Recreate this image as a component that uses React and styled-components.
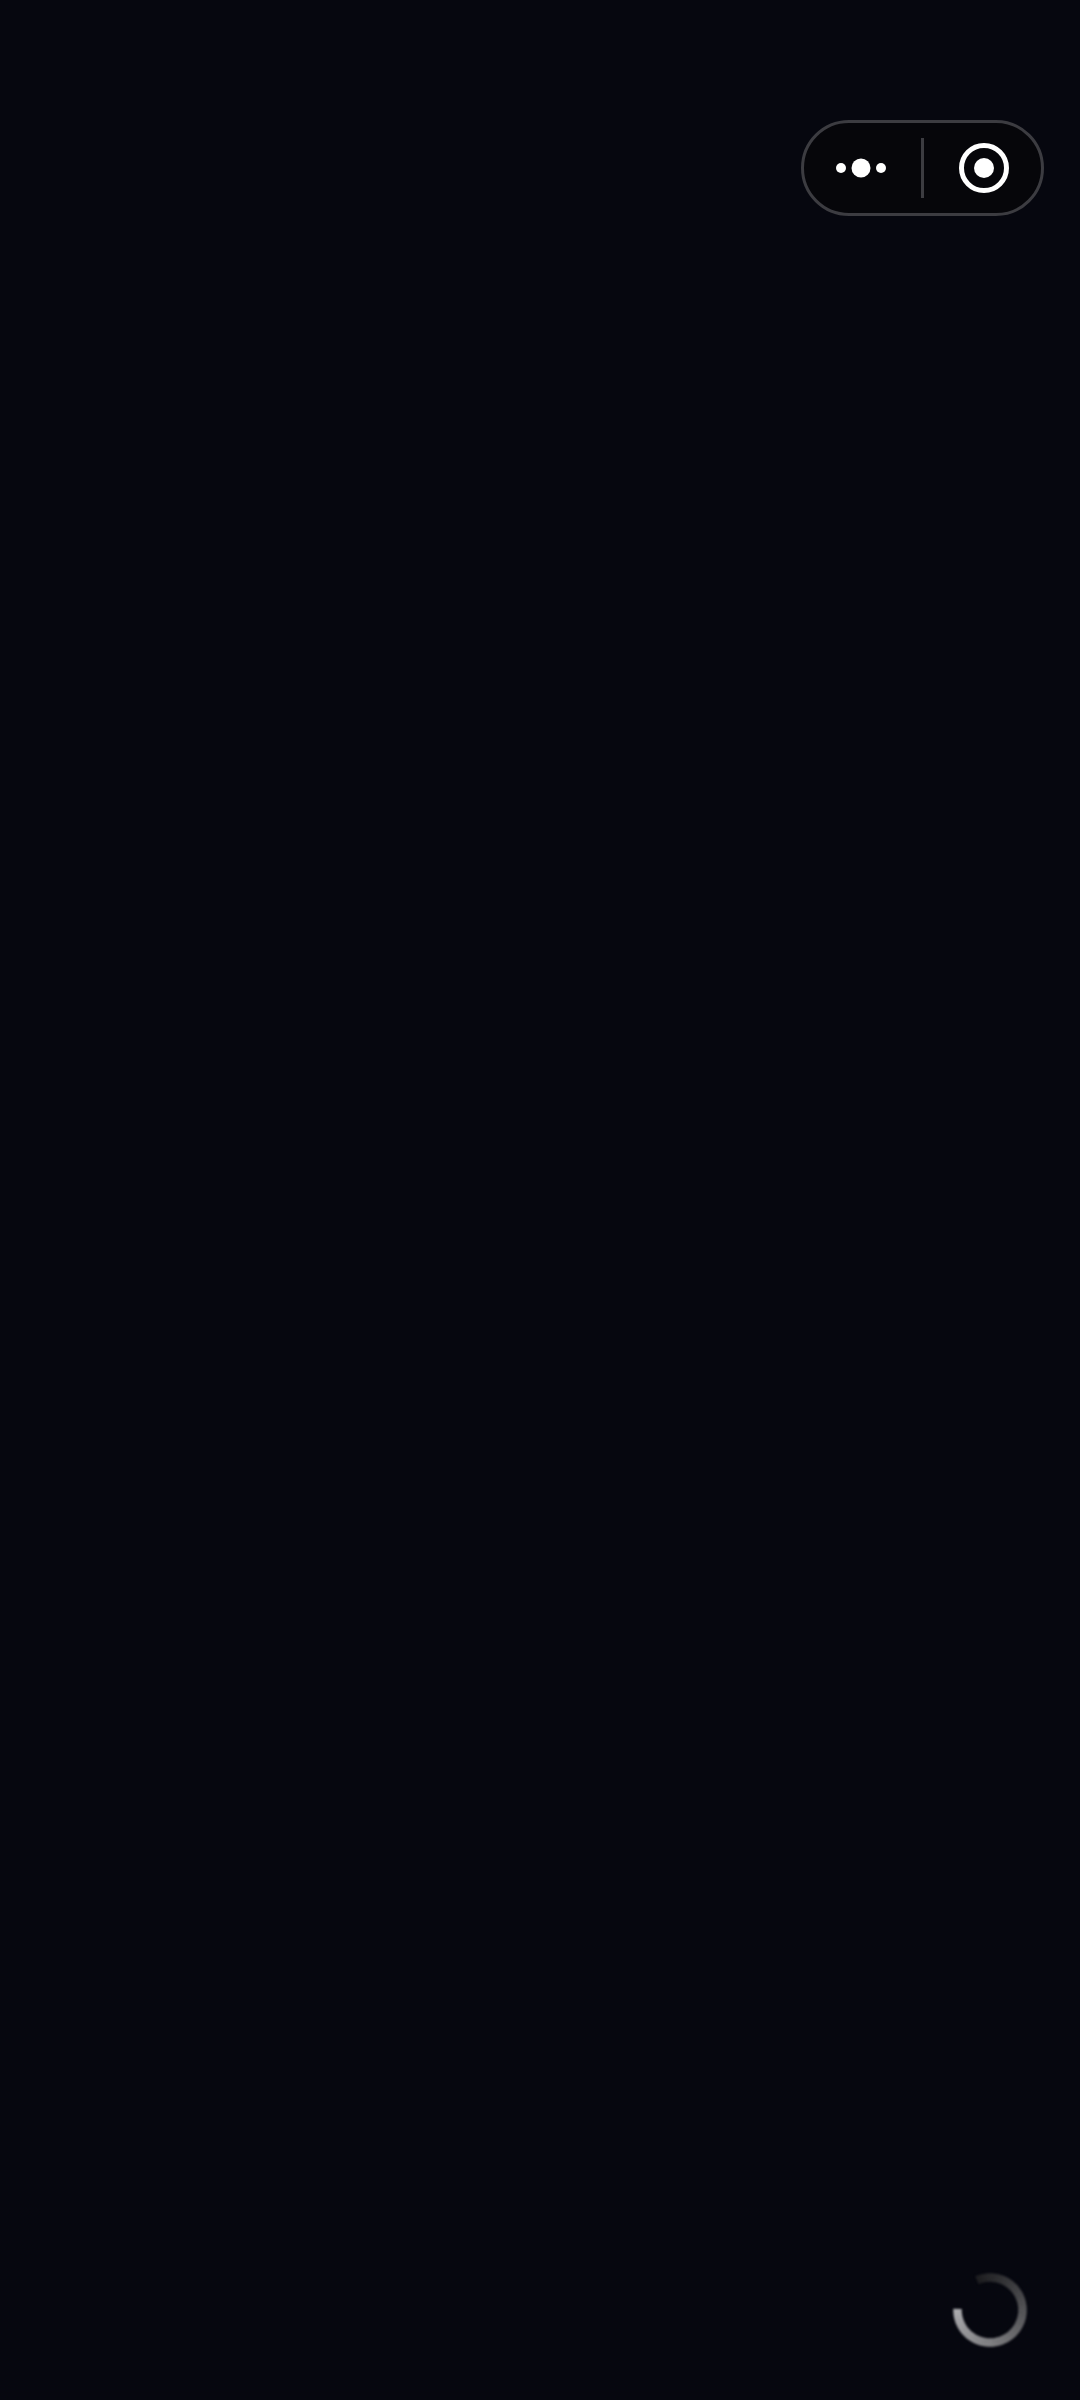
import React from "react";
import styled, { createGlobalStyle } from "styled-components";

const Global = createGlobalStyle`
  html, body { margin: 0; padding: 0; background: #06070f; }
`;

const Page = styled.main`
  box-sizing: border-box;
  width: 1080px;
  height: 2400px;
  background: #06070f;
  padding: 120px 36px 48px 48px;
  display: flex;
  flex-direction: column;
  justify-content: space-between;
  align-items: flex-end;
`;

const Capsule = styled.div`
  box-sizing: border-box;
  width: 243px;
  height: 96px;
  border: 3px solid #3c3c41;
  border-radius: 48px;
  background: #06060a;
  display: flex;
  align-items: center;
`;

const CapsuleSide = styled.button`
  box-sizing: border-box;
  flex: none;
  width: 117px;
  height: 100%;
  padding: 0 ${(p) => p.$padRight || 0}px 0 ${(p) => p.$padLeft || 0}px;
  border: 0;
  background: transparent;
  display: flex;
  align-items: center;
  justify-content: center;
`;

const Divider = styled.div`
  width: 3px;
  height: 60px;
  background: #3c3c41;
  flex: none;
`;

const SpinnerSvg = styled.svg`
  display: block;
  width: 84px;
  height: 84px;
  margin-right: 12px;
  filter: blur(0.8px);
`;

const MoreIcon = () => (
  <svg width="52" height="20" viewBox="0 0 52 20">
    <circle cx="6" cy="10" r="5" fill="#fff" />
    <circle cx="26" cy="10" r="9.5" fill="#fff" />
    <circle cx="46" cy="10" r="5" fill="#fff" />
  </svg>
);

const CloseIcon = () => (
  <svg width="50" height="50" viewBox="0 0 50 50">
    <circle cx="25" cy="25" r="22.5" fill="none" stroke="#fff" strokeWidth="5" />
    <circle cx="25" cy="25" r="10" fill="#fff" />
  </svg>
);

const polar = (deg) => {
  const a = (deg * Math.PI) / 180;
  return [42 + 32.5 * Math.sin(a), 42 - 32.5 * Math.cos(a)];
};

const SEGMENTS = 60;
const START = 272;
const SWEEP = 295;

const Spinner = () => (
  <SpinnerSvg viewBox="0 0 84 84">
    {Array.from({ length: SEGMENTS }, (_, i) => {
      const from = START - (SWEEP * i) / SEGMENTS;
      const to = START - (SWEEP * (i + 1)) / SEGMENTS - 0.6;
      const [x1, y1] = polar(from);
      const [x2, y2] = polar(to);
      const t = i / (SEGMENTS - 1);
      const level = Math.round(172 - 142 * t);
      return (
        <path
          key={i}
          d={`M${x1} ${y1}A32.5 32.5 0 0 0 ${x2} ${y2}`}
          fill="none"
          stroke={`rgb(${level},${level},${level + 3})`}
          strokeWidth="8.5"
        />
      );
    })}
  </SpinnerSvg>
);

export default function App() {
  return (
    <Page>
      <Global />
      <Capsule>
        <CapsuleSide aria-label="更多" $padRight={3}>
          <MoreIcon />
        </CapsuleSide>
        <Divider />
        <CapsuleSide aria-label="关闭" $padLeft={3}>
          <CloseIcon />
        </CapsuleSide>
      </Capsule>
      <Spinner />
    </Page>
  );
}
